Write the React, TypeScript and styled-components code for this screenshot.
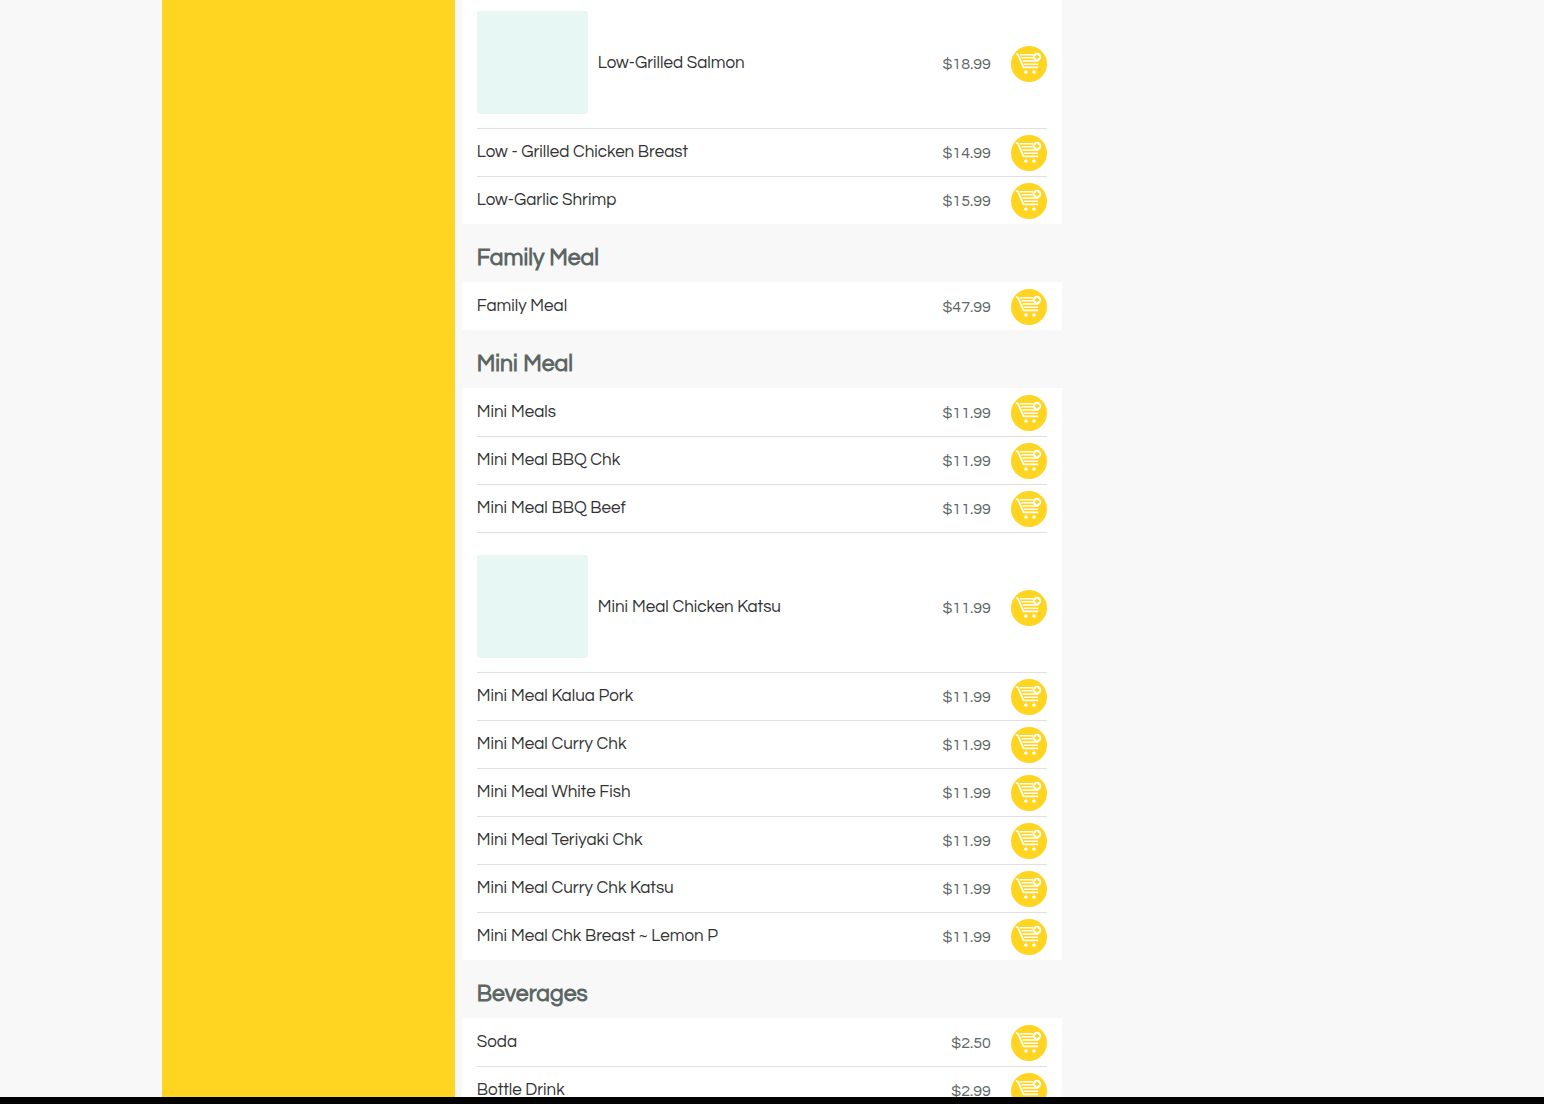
import React from 'react';
import styled, { createGlobalStyle } from 'styled-components';

const GlobalStyle = createGlobalStyle`
  *, *::before, *::after { box-sizing: border-box; }
  body {
    margin: 0;
    background: #f8f8f8;
    color: #333;
    font-family: Questrial, Inter, "Liberation Sans", sans-serif;
  }
`;

const Page = styled.div`
  display: flex;
  flex-direction: column;
  height: 100vh;
`;

const Columns = styled.main`
  display: flex;
  gap: 7px;
  flex: 1;
  width: 100%;
  max-width: 1220px;
  min-height: 0;
  margin: 0 auto;
  overflow: hidden;
`;

const Sidebar = styled.aside`
  flex: 0 0 24%;
  background: #ffd521;
`;

const Menu = styled.div`
  flex: 0 1 600px;
  min-width: 0;
  margin-top: -12px;
`;

const Heading = styled.h2`
  margin: 0;
  padding: 19px 15px 9px;
  color: #5c6664;
  font-size: 23px;
  line-height: 30px;
  font-weight: 700;
`;

const List = styled.ul`
  margin: 0;
  padding: 0 15px;
  list-style: none;
  background: #fff;
`;

const Row = styled.li<{ $photo?: boolean }>`
  display: flex;
  align-items: center;
  padding: ${(p) => (p.$photo ? '22px 0 12px' : '6px 0 5px')};
  border-top: 1px solid #e0e0e0;

  &:first-child {
    border-top-color: transparent;
  }
`;

const Photo = styled.div`
  width: 111px;
  height: 103px;
  margin: 0 10px 2px 0;
  border-radius: 3px;
  background: #e7f7f4;
`;

const Name = styled.span`
  flex: 1;
  padding-bottom: 2px;
  font-size: 17px;
  line-height: 24px;
`;

const Price = styled.span`
  color: #5c6664;
  font-size: 16px;
  line-height: 24px;
`;

const AddButton = styled.button`
  display: block;
  width: 36px;
  height: 36px;
  margin-left: 20px;
  padding: 0;
  border: 0;
  border-radius: 50%;
  background: #ffd521;
  cursor: pointer;

  svg {
    display: block;
  }
`;

const BottomBar = styled.footer`
  height: 7px;
  background: #000;
`;

interface Item {
  name: string;
  price: string;
  photo?: boolean;
}

interface Section {
  title?: string;
  items: Item[];
}

const sections: Section[] = [
  {
    items: [
      { name: 'Low-Grilled Salmon', price: '$18.99', photo: true },
      { name: 'Low - Grilled Chicken Breast', price: '$14.99' },
      { name: 'Low-Garlic Shrimp', price: '$15.99' },
    ],
  },
  { title: 'Family Meal', items: [{ name: 'Family Meal', price: '$47.99' }] },
  {
    title: 'Mini Meal',
    items: [
      { name: 'Mini Meals', price: '$11.99' },
      { name: 'Mini Meal BBQ Chk', price: '$11.99' },
      { name: 'Mini Meal BBQ Beef', price: '$11.99' },
      { name: 'Mini Meal Chicken Katsu', price: '$11.99', photo: true },
      { name: 'Mini Meal Kalua Pork', price: '$11.99' },
      { name: 'Mini Meal Curry Chk', price: '$11.99' },
      { name: 'Mini Meal White Fish', price: '$11.99' },
      { name: 'Mini Meal Teriyaki Chk', price: '$11.99' },
      { name: 'Mini Meal Curry Chk Katsu', price: '$11.99' },
      { name: 'Mini Meal Chk Breast ~ Lemon P', price: '$11.99' },
    ],
  },
  {
    title: 'Beverages',
    items: [
      { name: 'Soda', price: '$2.50' },
      { name: 'Bottle Drink', price: '$2.99' },
    ],
  },
];

const CartIcon = () => (
  <svg width="36" height="36" viewBox="0 0 36 36" fill="none" aria-hidden="true">
    <path
      d="M5.6 8.2l1.4.4L12.6 21.4h13.8"
      stroke="#fff"
      strokeWidth="1.8"
      strokeLinecap="round"
      strokeLinejoin="round"
    />
    <path
      d="M9.6 8.8h12M11 11.8h10.6M12.2 15h14.6M13.4 18.2h13"
      stroke="#fff"
      strokeWidth="1.6"
      strokeLinecap="round"
    />
    <circle cx="26" cy="11" r="4.2" fill="#fff" />
    <path d="M26 8.7v4.6M23.7 11h4.6" stroke="#ffd521" strokeWidth="1.8" />
    <circle cx="15" cy="26" r="1.8" fill="#fff" />
    <circle cx="23" cy="26" r="1.8" fill="#fff" />
  </svg>
);

export default function App() {
  return (
    <>
      <GlobalStyle />
      <Page>
        <Columns>
          <Sidebar />
          <Menu>
            {sections.map((section, index) => (
              <section key={index}>
                {section.title && <Heading>{section.title}</Heading>}
                <List>
                  {section.items.map((item) => (
                    <Row key={item.name} $photo={item.photo}>
                      {item.photo && <Photo />}
                      <Name>{item.name}</Name>
                      <Price>{item.price}</Price>
                      <AddButton type="button" aria-label={`Add ${item.name} to cart`}>
                        <CartIcon />
                      </AddButton>
                    </Row>
                  ))}
                </List>
              </section>
            ))}
          </Menu>
        </Columns>
        <BottomBar />
      </Page>
    </>
  );
}
